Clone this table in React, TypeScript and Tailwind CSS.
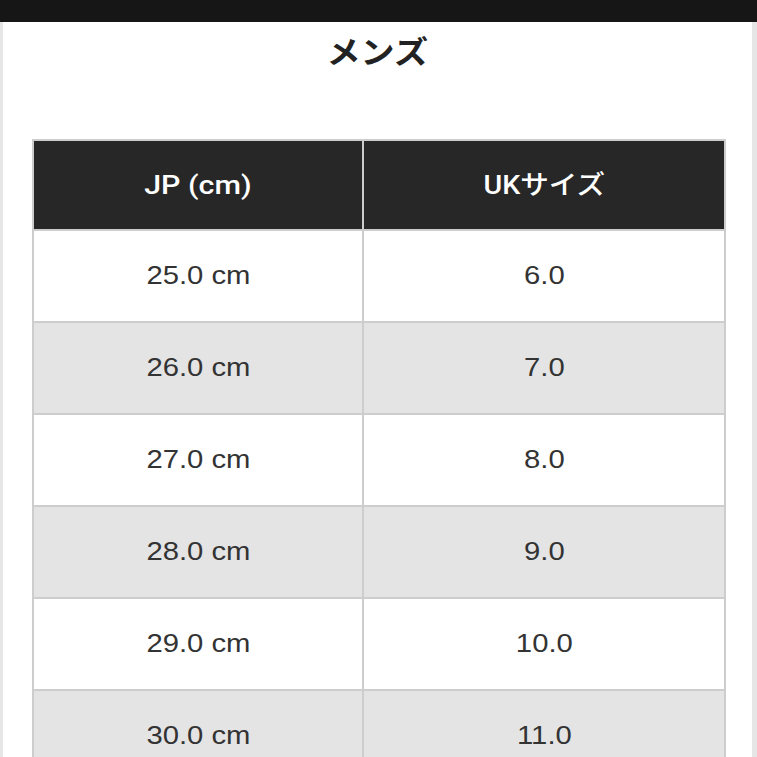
import React from "react";

const ROWS = [
  { jp: "25.0 cm", uk: "6.0" },
  { jp: "26.0 cm", uk: "7.0" },
  { jp: "27.0 cm", uk: "8.0" },
  { jp: "28.0 cm", uk: "9.0" },
  { jp: "29.0 cm", uk: "10.0" },
  { jp: "30.0 cm", uk: "11.0" },
];

const font = {
  fontFamily: '"Liberation Sans", "Noto Sans CJK JP", sans-serif',
};

export default function App() {
  return (
    <div className="w-[757px] h-[757px] overflow-hidden flex flex-col bg-white" style={font}>
      {/* top bar */}
      <div className="h-[22px] shrink-0 bg-[#161616]" />

      <div className="flex flex-1">
        <div className="w-[3px] bg-[#e6e6e6]" />

        <div className="flex-1 bg-white">
          <h1 className="pt-[5px] h-[117px] text-center text-[31px] font-bold text-[#222] leading-[52px]">
            <span className="inline-block scale-x-[1.1]">メンズ</span>
          </h1>

          {/* size table */}
          <div className="ml-[29px] w-[694px] border-x-2 border-t-2 border-[#cdcdcd]">
            <div className="flex h-[90px] bg-[#272727] border-b-2 border-[#cdcdcd] text-white text-[26px] font-medium">
              <div className="w-[330px] border-r-2 border-[#cdcdcd] flex items-center justify-center">
                <span className="inline-block scale-x-[1.17] [font-family:Roboto,'Noto_Sans_CJK_JP',sans-serif]">
                  JP (cm)
                </span>
              </div>
              <div className="flex-1 flex items-center justify-center">
                <span className="inline-block scale-x-[1.1] [font-family:Roboto,'Noto_Sans_CJK_JP',sans-serif]">
                  UKサイズ
                </span>
              </div>
            </div>

            {ROWS.map((r, i) => (
              <div
                key={r.jp}
                className={
                  "flex h-[92px] border-b-2 border-[#cdcdcd] text-[25px] text-[#333] " +
                  (i % 2 === 1 ? "bg-[#e4e4e4]" : "bg-white")
                }
              >
                <div className="w-[330px] border-r-2 border-[#cdcdcd] flex items-center justify-center">
                  <span className="inline-block scale-x-[1.17]">{r.jp}</span>
                </div>
                <div className="flex-1 flex items-center justify-center">
                  <span className="inline-block scale-x-[1.17]">{r.uk}</span>
                </div>
              </div>
            ))}
          </div>
        </div>

        <div className="w-[5px] bg-[#e6e6e6]" />
      </div>
    </div>
  );
}
